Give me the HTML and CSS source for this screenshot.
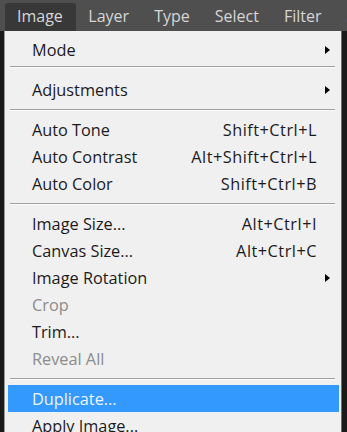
FILE: index.html
```html
<!DOCTYPE html>
<html lang="en">
<head>
    <meta charset="UTF-8">
    <title>Image menu</title>
    <link rel="stylesheet" href="styles.css">
</head>
<body>
    <div class="menubar">
        <div class="menubar-item active">Image</div>
        <div class="menubar-item">Layer</div>
        <div class="menubar-item">Type</div>
        <div class="menubar-item">Select</div>
        <div class="menubar-item">Filter</div>
        <div class="menubar-item">3D</div>
    </div>

    <div class="workspace">
        <div class="menu">
            <div class="item"><span>Mode</span><span class="arrow"></span></div>
            <div class="sep sep-top"></div>
            <div class="item"><span>Adjustments</span><span class="arrow"></span></div>
            <div class="sep"></div>
            <div class="item"><span>Auto Tone</span><span class="key">Shift+Ctrl+L</span></div>
            <div class="item"><span>Auto Contrast</span><span class="key">Alt+Shift+Ctrl+L</span></div>
            <div class="item"><span>Auto Color</span><span class="key">Shift+Ctrl+B</span></div>
            <div class="sep"></div>
            <div class="item"><span>Image Size...</span><span class="key">Alt+Ctrl+I</span></div>
            <div class="item"><span>Canvas Size...</span><span class="key">Alt+Ctrl+C</span></div>
            <div class="item"><span>Image Rotation</span><span class="arrow"></span></div>
            <div class="item disabled"><span>Crop</span></div>
            <div class="item"><span>Trim...</span></div>
            <div class="item disabled"><span>Reveal All</span></div>
            <div class="sep"></div>
            <div class="item selected"><span>Duplicate...</span></div>
            <div class="item"><span>Apply Image...</span></div>
        </div>
    </div>
</body>
</html>
```

FILE: styles.css
```css
body {
    margin: 0;
    background: #1e1e1e;
    font-family: 'Open Sans', 'Noto Sans', Arial, sans-serif;
    overflow: hidden;
}

.menubar {
    display: flex;
    height: 31px;
    background: #4f4f4f;
    padding-left: 5px;
    white-space: nowrap;
    overflow: hidden;
}

.menubar-item {
    margin-top: 3px;
    padding: 0 12.5px;
    font-size: 16px;
    line-height: 27px;
    color: #d6d6d6;
}

.menubar-item.active {
    background: #383838;
    border-radius: 3px 3px 0 0;
    padding: 0 13px 0 12px;
}

.workspace {
    height: 401px;
    padding-left: 4px;
    background: #1a1a1a;
}

.menu {
    width: 338px;
    height: 100%;
    background: #f0f0f0;
    border-left: 1px solid #9a9a9a;
    border-right: 1px solid #6e6e6e;
    padding-top: 5px;
    box-sizing: border-box;
}

.item {
    display: flex;
    align-items: center;
    justify-content: space-between;
    height: 27px;
    margin: 0 2px 0 3px;
    padding: 0 24px 0 24px;
    font-size: 16.3px;
    color: #1c1a1e;
    white-space: nowrap;
}

.item.disabled {
    color: #8c8c8c;
}

.item.selected {
    background: #3399ff;
    color: #eef5ff;
}

.key {
    margin-right: -2px;
    letter-spacing: 0.5px;
}

.arrow {
    width: 0;
    height: 0;
    border-top: 4.5px solid transparent;
    border-bottom: 4.5px solid transparent;
    border-left: 5px solid #000;
    margin-right: -15px;
}

.sep {
    height: 1px;
    margin: 6px 6px 5px 5px;
    background: #a0a0a0;
    border-bottom: 1px solid #fcfcfc;
}

.sep-top {
    margin-top: 3px;
    margin-bottom: 8px;
}
```
